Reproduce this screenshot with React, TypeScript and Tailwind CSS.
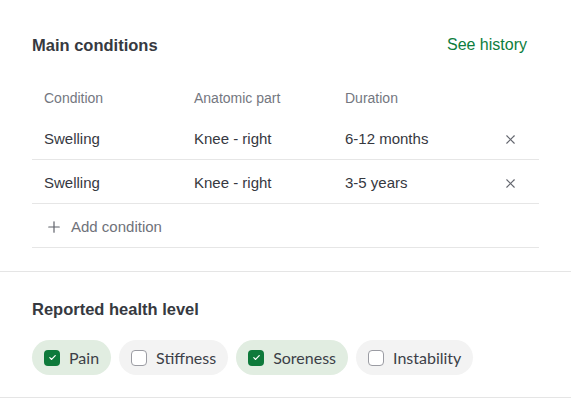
import { Plus, X } from 'lucide-react';

const rows = [
  { condition: 'Swelling', part: 'Knee - right', duration: '6-12 months' },
  { condition: 'Swelling', part: 'Knee - right', duration: '3-5 years' },
];

const levels = [
  { label: 'Pain', checked: true },
  { label: 'Stiffness', checked: false },
  { label: 'Soreness', checked: true },
  { label: 'Instability', checked: false },
];

function Chip({ label, checked }: { label: string; checked: boolean }) {
  return (
    <div
      className={`flex h-[35px] items-center gap-[9px] rounded-full pl-3 pr-[12px] ${
        checked ? 'bg-[#e1ede1]' : 'bg-[#f3f3f3]'
      }`}
    >
      {checked ? (
        <span className="flex h-4 w-4 items-center justify-center rounded-[4px] bg-[#0e7a3b]">
          <svg width="9" height="9" viewBox="0 0 10 10" fill="none">
            <path d="M2 5.2l2 2 4-4.4" stroke="white" strokeWidth="1.3" strokeLinecap="round" strokeLinejoin="round" />
          </svg>
        </span>
      ) : (
        <span className="h-4 w-4 rounded-[4px] border border-[#9b9ca3] bg-white" />
      )}
      <span className="text-[16px] text-[#3c3f47] [font-family:Lato,sans-serif]">{label}</span>
    </div>
  );
}

export default function App() {
  return (
    <div className="w-[571px] bg-white [font-family:'Liberation_Sans',Arial,sans-serif]">
      <section className="border-b border-[#e5e5e5] px-8 pb-[23px] pt-[33px]">
        <div className="flex h-6 items-center justify-between">
          <h2 className="text-[16.5px] font-bold text-[#363940]">Main conditions</h2>
          <a className="pr-[12px] text-[16px] text-[#0d7d3d]">See history</a>
        </div>

        <div className="mt-[21px]">
          <div className="grid h-[38px] grid-cols-[150px_151px_1fr_40px] items-center pt-[2px] text-[14px] text-[#74777f]">
            <span className="pl-3">Condition</span>
            <span className="pl-3">Anatomic part</span>
            <span className="pl-3">Duration</span>
            <span />
          </div>
          {rows.map((r, i) => (
            <div
              key={i}
              className="grid h-[44px] grid-cols-[150px_151px_1fr_40px] items-center border-b border-[#e6e6e6] pt-[3px] text-[15px] text-[#36383f]"
            >
              <span className="pl-3">{r.condition}</span>
              <span className="pl-3">{r.part}</span>
              <span className="pl-3">{r.duration}</span>
              <span className="flex justify-start pl-[4px]">
                <X size={15} strokeWidth={1.7} className="text-[#63666e]" />
              </span>
            </div>
          ))}
          <div className="flex h-[44px] items-center gap-[8px] border-b border-[#e6e6e6] pl-[13px] pt-[3px] text-[15px] text-[#6f727a]">
            <Plus size={18} strokeWidth={1.6} className="text-[#5f626a]" />
            <span>Add condition</span>
          </div>
        </div>
      </section>

      <section className="border-b border-[#e5e5e5] px-8 pb-[22px] pt-[25px]">
        <h2 className="flex h-6 items-center text-[16.5px] font-bold text-[#363940]">Reported health level</h2>
        <div className="mt-[19px] flex gap-2">
          {levels.map(l => (
            <Chip key={l.label} label={l.label} checked={l.checked} />
          ))}
        </div>
      </section>
    </div>
  );
}
